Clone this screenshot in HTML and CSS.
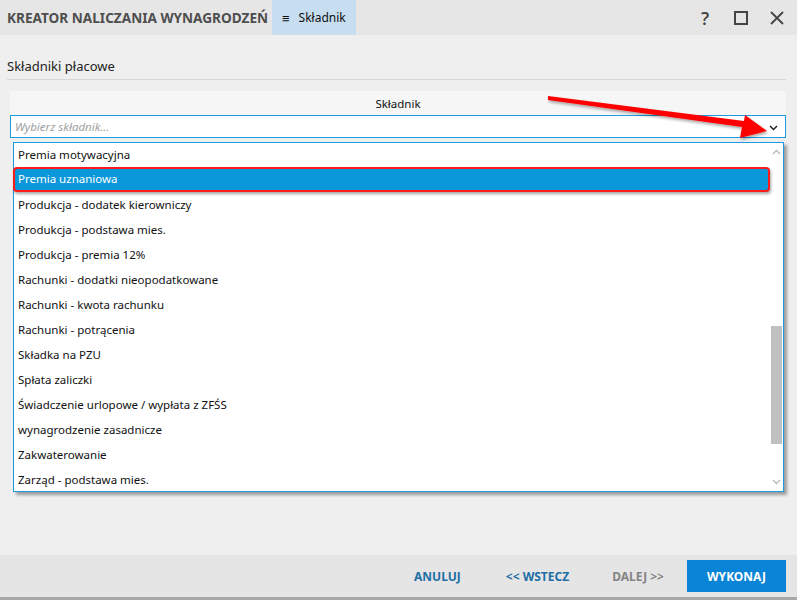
FILE: index.html
```html
<!DOCTYPE html>
<html lang="pl">
<head>
<meta charset="utf-8">
<link rel="stylesheet" href="styles.css">
</head>
<body>
<div class="window">
  <header class="titlebar">
    <div class="title">KREATOR NALICZANIA WYNAGRODZEŃ</div>
    <div class="tab"><span class="burger">≡</span>Składnik</div>
    <div class="spacer"></div>
    <div class="ctrl help">?</div>
    <div class="ctrl"><svg width="14" height="14" viewBox="0 0 14 14"><rect x="1" y="1" width="12" height="12" fill="none" stroke="#444" stroke-width="2"/></svg></div>
    <div class="ctrl"><svg width="14" height="14" viewBox="0 0 14 14"><path d="M1 1L13 13M13 1L1 13" stroke="#444" stroke-width="1.8"/></svg></div>
  </header>
  <main class="content">
    <div class="section-title">Składniki płacowe</div>
    <div class="grid-head">Składnik</div>
    <div class="combo">
      <span class="placeholder">Wybierz składnik...</span>
      <svg class="chev" width="9" height="6" viewBox="0 0 9 6"><path d="M1 1L4.5 4.5L8 1" fill="none" stroke="#222" stroke-width="1.5"/></svg>
    </div>
  </main>
  <footer class="footer">
    <button class="link cancel">ANULUJ</button>
    <button class="link back">&lt;&lt; WSTECZ</button>
    <button class="link disabled">DALEJ &gt;&gt;</button>
    <button class="primary">WYKONAJ</button>
  </footer>

  <div class="dropdown">
    <ul class="items">
      <li>Premia motywacyjna</li>
      <li class="selected">Premia uznaniowa</li>
      <li>Produkcja - dodatek kierowniczy</li>
      <li>Produkcja - podstawa mies.</li>
      <li>Produkcja - premia 12%</li>
      <li>Rachunki - dodatki nieopodatkowane</li>
      <li>Rachunki - kwota rachunku</li>
      <li>Rachunki - potrącenia</li>
      <li>Składka na PZU</li>
      <li>Spłata zaliczki</li>
      <li>Świadczenie urlopowe / wypłata z ZFŚS</li>
      <li>wynagrodzenie zasadnicze</li>
      <li>Zakwaterowanie</li>
      <li>Zarząd - podstawa mies.</li>
    </ul>
    <div class="scrollbar">
      <svg class="arrow-up" width="9" height="6" viewBox="0 0 9 6"><path d="M1 5L4.5 1.5L8 5" fill="none" stroke="#b8b8b8" stroke-width="1.3"/></svg>
      <div class="track"><div class="thumb"></div></div>
      <svg class="arrow-down" width="9" height="6" viewBox="0 0 9 6"><path d="M1 1L4.5 4.5L8 1" fill="none" stroke="#b8b8b8" stroke-width="1.3"/></svg>
    </div>
  </div>

  <svg class="annot-arrow" width="797" height="600" viewBox="0 0 797 600">
    <defs>
      <filter id="sh" x="-10%" y="-50%" width="120%" height="200%">
        <feDropShadow dx="1" dy="2" stdDeviation="1.5" flood-color="#000" flood-opacity="0.35"/>
      </filter>
    </defs>
    <polygon filter="url(#sh)" fill="#ff0000" points="548,96 744,121 745,115 767,131 740,138 742,127 548,100"/>
  </svg>
</div>
</body>
</html>
```
FILE: styles.css
```css
* { box-sizing: border-box; }
html, body { margin: 0; padding: 0; }
body {
  width: 797px;
  height: 600px;
  overflow: hidden;
  font-family: "Noto Sans", "Open Sans", sans-serif;
  background: #efefef;
  color: #111;
}
.window {
  position: relative;
  width: 797px;
  height: 600px;
  display: flex;
  flex-direction: column;
}
.titlebar {
  height: 35px;
  background: #e6e6e6;
  display: flex;
  align-items: stretch;
  flex: none;
}
.title {
  display: flex;
  align-items: center;
  padding-left: 7px;
  font-size: 13.6px;
  font-weight: 700;
  color: #4e4e4e;
  width: 272px;
  white-space: nowrap;
}
.tab {
  background: #c6def0;
  width: 84px;
  display: flex;
  align-items: center;
  font-size: 12px;
  color: #111;
  padding-left: 10px;
}
.burger { font-size: 13px; margin-right: 9px; }
.spacer { flex: 1; }
.ctrl {
  width: 36px;
  display: flex;
  align-items: center;
  justify-content: center;
  color: #444;
}
.help { font-size: 18px; font-weight: 600; font-family: "Open Sans", sans-serif; }
.ctrl:last-child { margin-right: 2px; }

.content {
  flex: 1;
  padding: 22px 11px 0 7px;
}
.section-title {
  font-size: 13px;
  line-height: 18px;
  padding-bottom: 4px;
  border-bottom: 1px solid #d6d6d6;
  color: #222;
}
.grid-head {
  margin: 11px 0 0 3px;
  height: 24px;
  background: #f6f6f6;
  font-size: 11.5px;
  display: flex;
  align-items: center;
  justify-content: center;
  color: #111;
}
.combo {
  margin-left: 3px;
  height: 23px;
  background: #fff;
  border: 1px solid #1a9be0;
  display: flex;
  align-items: center;
  padding: 0 7px 0 4px;
}
.placeholder {
  flex: 1;
  font-style: italic;
  font-size: 11.5px;
  color: #a0a0a0;
}
.chev { margin-top: 2px; }

.footer {
  flex: none;
  height: 45px;
  background: #e5e5e5;
  border-bottom: 3px solid #a8a8a8;
  display: flex;
  align-items: center;
  justify-content: flex-end;
  padding: 0 11px 0 0;
}
.footer button {
  font-family: "Noto Sans", "Open Sans", sans-serif;
  font-weight: 700;
  font-size: 12px;
  border: none;
  background: none;
  cursor: pointer;
}
.link { color: #1d6fa6; padding: 0; }
.cancel { margin-right: 45px; }
.back { margin-right: 43px; }
.link.disabled { color: #848484; margin-right: 23px; }
.primary {
  background: #0a84d6 !important;
  color: #fff;
  width: 99px;
  height: 32px;
}

.dropdown {
  position: absolute;
  left: 13px;
  top: 142px;
  width: 771px;
  height: 350px;
  background: #fff;
  border: 1px solid #1a9be0;
  box-shadow: 3px 3px 3px rgba(0,0,0,0.35);
  display: flex;
}
.items {
  list-style: none;
  margin: 0;
  padding: 0;
  flex: 1;
}
.items li {
  height: 25px;
  display: flex;
  align-items: center;
  padding: 0 0 2px 4px;
  font-size: 11.5px;
  color: #111;
}
.items li.selected {
  background: #0a98da;
  color: #fff;
  border: 2px solid #ff1a1a;
  border-radius: 4px;
  margin: -1px 0 1px -1px;
  padding-left: 3px;
  box-shadow: 1px 2px 3px rgba(0,0,0,0.35);
}
.scrollbar {
  width: 13px;
  display: flex;
  flex-direction: column;
  align-items: center;
  padding: 0 1px;
}
.arrow-up { margin-top: 6px; }
.arrow-down { margin-bottom: 6px; }
.track { flex: 1; width: 11px; position: relative; }
.thumb {
  position: absolute;
  left: 0;
  right: 0;
  top: 171px;
  height: 118px;
  background: #c0c0c0;
}
.annot-arrow {
  position: absolute;
  left: 0;
  top: 0;
  pointer-events: none;
}
```
